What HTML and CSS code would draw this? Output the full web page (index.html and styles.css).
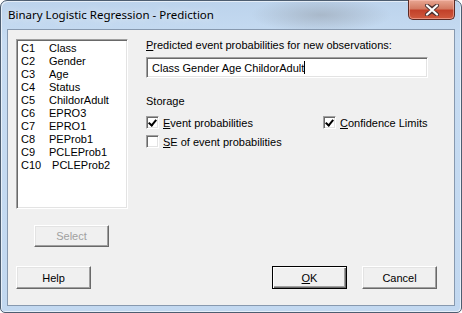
FILE: index.html
```html
<!DOCTYPE html>
<html lang="en">
<head>
  <meta charset="UTF-8" />
  <title>Binary Logistic Regression - Prediction</title>
  <link rel="stylesheet" href="styles.css">
</head>
<body>
  <div class="window">
    <div class="titlebar">
      <span class="title">Binary Logistic Regression - Prediction</span>
      <button class="close" title="Close">
        <svg width="16" height="12" viewBox="0 0 16 12">
          <path d="M3 1.5 L8 5 L13 1.5 M3 10.5 L8 7 L13 10.5 M3 1.5 L13 10.5 M13 1.5 L3 10.5" stroke="#4b3030" stroke-width="4" stroke-linecap="round" fill="none"/>
          <path d="M3 1.5 L13 10.5 M13 1.5 L3 10.5" stroke="#fff" stroke-width="2.2" stroke-linecap="round" fill="none"/>
        </svg>
      </button>
    </div>

    <div class="client">
      <div class="main">
        <div class="left">
          <ul class="varlist">
            <li><span class="col">C1</span>Class</li>
            <li><span class="col">C2</span>Gender</li>
            <li><span class="col">C3</span>Age</li>
            <li><span class="col">C4</span>Status</li>
            <li><span class="col">C5</span>ChildorAdult</li>
            <li><span class="col">C6</span>EPRO3</li>
            <li><span class="col">C7</span>EPRO1</li>
            <li><span class="col">C8</span>PEProb1</li>
            <li><span class="col">C9</span>PCLEProb1</li>
            <li><span class="col">C10</span>&nbsp;PCLEProb2</li>
          </ul>
          <button class="btn select" disabled>Select</button>
        </div>

        <div class="right">
          <div class="field-label"><u>P</u>redicted event probabilities for new observations:</div>
          <div class="textbox">Class Gender Age ChildorAdult<span class="caret"></span></div>

          <div class="group-label">Storage</div>
          <div class="checks">
            <label class="check"><span class="box checked"></span><span><u>E</u>vent probabilities</span></label>
            <label class="check"><span class="box checked"></span><span><u>C</u>onfidence Limits</span></label>
            <label class="check"><span class="box"></span><span><u>S</u>E of event probabilities</span></label>
          </div>
        </div>
      </div>

      <div class="actions">
        <button class="btn">Help</button>
        <span class="spacer"></span>
        <button class="btn default"><u>O</u>K</button>
        <button class="btn">Cancel</button>
      </div>
    </div>
  </div>
</body>
</html>
```

FILE: styles.css
```css
body {
  margin: 0;
  padding: 0;
  background: #fff;
  font-family: "Liberation Sans", Arial, sans-serif;
  font-size: 11px;
  color: #000;
}
.window {
  width: 462px;
  height: 313px;
  box-sizing: border-box;
  display: flex;
  flex-direction: column;
  border: 1px solid #4d5d70;
  border-radius: 7px 7px 5px 5px;
  background:
    radial-gradient(ellipse 70px 18px at 320px 14px, rgba(150,160,172,0.55), transparent),
    linear-gradient(to bottom, #bcd3ec 0px, #c7dcf2 40px, #c2d8f0 100%);
  box-shadow: inset 1px 1px 0 rgba(255,255,255,0.6), inset -1px -1px 0 rgba(255,255,255,0.6);
}
.titlebar {
  height: 28px;
  display: flex;
  align-items: flex-start;
  justify-content: space-between;
}
.title {
  font-family: "Noto Sans", "Open Sans", sans-serif;
  font-size: 11.5px;
  margin: 6px 0 0 7px;
  color: #000;
  text-shadow: 0 0 8px rgba(255,255,255,0.9);
}
.close {
  width: 47px;
  height: 20px;
  margin: -1px 6px 0 0;
  padding: 0;
  border: 1px solid #5b2a24;
  border-top: none;
  border-radius: 0 0 5px 5px;
  background: linear-gradient(to bottom, #e8a793 0%, #d47b63 45%, #c2412a 55%, #d05a3e 100%);
  box-shadow: inset 0 0 0 1px rgba(255,200,190,0.5);
  display: flex;
  align-items: center;
  justify-content: center;
}
.client {
  flex: 1;
  margin: 0 6px 6px 6px;
  border: 1px solid #8799af;
  background: #f0f0f0;
  display: flex;
  flex-direction: column;
  padding: 9px 17px 16px 8px;
}
.main {
  display: flex;
  gap: 18px;
}
.left {
  width: 112px;
  display: flex;
  flex-direction: column;
}
.varlist {
  list-style: none;
  margin: 0;
  padding: 2px 0 0 4px;
  height: 170px;
  box-sizing: border-box;
  background: #fff;
  border: 1px solid;
  border-color: #a0a0a0 #fff #fff #a0a0a0;
  box-shadow: inset 1px 1px 0 #696969, inset -1px -1px 0 #e3e3e3;
}
.varlist li {
  height: 13px;
  line-height: 13px;
  white-space: nowrap;
}
.col {
  display: inline-block;
  width: 28px;
}
.btn {
  width: 75px;
  height: 23px;
  padding: 0;
  font-family: "Liberation Sans", Arial, sans-serif;
  font-size: 11px;
  color: #000;
  background: #f0f0f0;
  border: 1px solid;
  border-color: #fff #696969 #696969 #fff;
  box-shadow: inset -1px -1px 0 #a0a0a0, inset 1px 1px 0 #e3e3e3;
}
.btn.select {
  height: 22px;
  margin: 16px 0 0 18px;
  color: #a0a0a0;
}
.btn.default {
  border-color: #000;
  box-shadow: inset 1px 1px 0 #fff, inset -1px -1px 0 #696969, inset -2px -2px 0 #a0a0a0;
}
.right {
  flex: 1;
  display: flex;
  flex-direction: column;
  padding-right: 9px;
}
.field-label {
  line-height: 13px;
}
.textbox {
  margin-top: 5px;
  height: 21px;
  box-sizing: border-box;
  padding: 3px 0 0 5px;
  line-height: 14px;
  background: #fff;
  border: 1px solid;
  border-color: #a0a0a0 #fff #fff #a0a0a0;
  box-shadow: inset 1px 1px 0 #696969, inset -1px -1px 0 #e3e3e3;
  white-space: nowrap;
}
.caret {
  display: inline-block;
  width: 1px;
  height: 13px;
  background: #000;
  vertical-align: -2px;
}
.group-label {
  margin-top: 17px;
  line-height: 13px;
}
.checks {
  margin-top: 8px;
  display: grid;
  grid-template-columns: 177px auto;
  row-gap: 6px;
}
.check {
  display: flex;
  align-items: center;
  gap: 4px;
  height: 13px;
}
.box {
  width: 13px;
  height: 13px;
  box-sizing: border-box;
  background: #fff;
  border: 1px solid;
  border-color: #a0a0a0 #fff #fff #a0a0a0;
  box-shadow: inset 1px 1px 0 #696969, inset -1px -1px 0 #e3e3e3;
  position: relative;
}
.box.checked::after {
  content: "";
  position: absolute;
  left: 3px;
  top: 1px;
  width: 3px;
  height: 6px;
  border: solid #000;
  border-width: 0 2px 2px 0;
  transform: rotate(40deg);
}
.actions {
  margin-top: auto;
  display: flex;
  gap: 15px;
}
.spacer {
  flex: 1;
}
```
